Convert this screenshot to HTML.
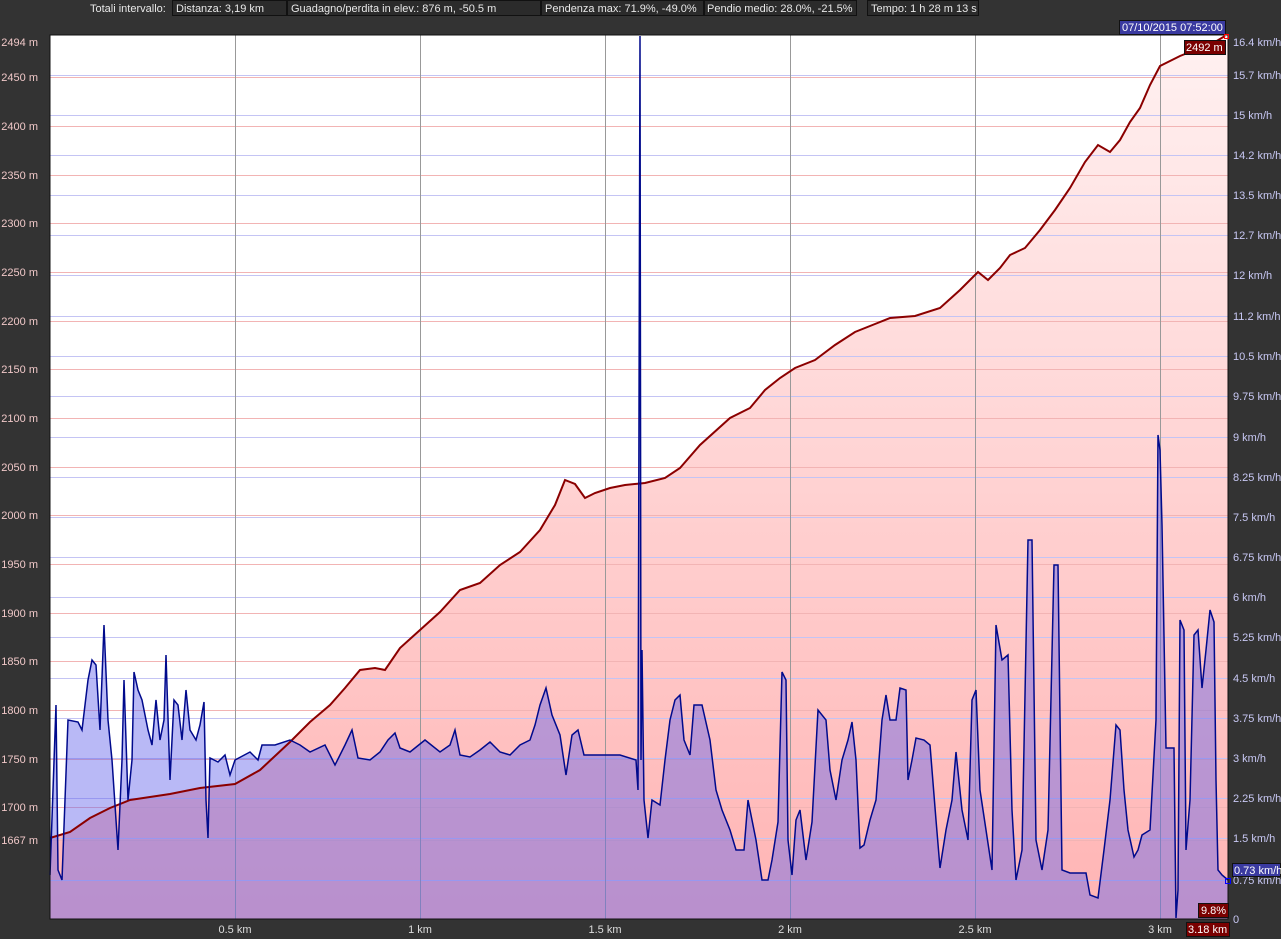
<!DOCTYPE html>
<html><head><meta charset="utf-8"><style>
html,body{margin:0;padding:0;background:#333;width:1281px;height:939px;overflow:hidden}
svg{display:block;font-family:"Liberation Sans",sans-serif}
</style></head><body>
<svg width="1281" height="939" viewBox="0 0 1281 939" xmlns="http://www.w3.org/2000/svg">
<defs>
<linearGradient id="pk" x1="0" y1="0" x2="0" y2="1">
<stop offset="0" stop-color="#fff1f1"/><stop offset="1" stop-color="#ffb4b4"/>
</linearGradient>
</defs>
<rect width="1281" height="939" fill="#333"/>
<!-- top bar -->
<g font-size="11" fill="#e8e8e8">
<text x="90" y="12">Totali intervallo:</text>
<rect x="172.5" y="0.5" width="114" height="15" fill="#2b2b2b" stroke="#111"/>
<text x="176" y="12">Distanza: 3,19 km</text>
<rect x="287.5" y="0.5" width="253" height="15" fill="#2b2b2b" stroke="#111"/>
<text x="291" y="12">Guadagno/perdita in elev.: 876 m, -50.5 m</text>
<rect x="541.5" y="0.5" width="162" height="15" fill="#2b2b2b" stroke="#111"/>
<text x="545" y="12">Pendenza max: 71.9%, -49.0%</text>
<rect x="704.5" y="0.5" width="152" height="15" fill="#2b2b2b" stroke="#111"/>
<text x="707" y="12">Pendio medio: 28.0%, -21.5%</text>
<rect x="867.5" y="0.5" width="111" height="15" fill="#2b2b2b" stroke="#111"/>
<text x="871" y="12">Tempo: 1 h 28 m 13 s</text>
</g>
<!-- plot bg -->
<rect x="50" y="35" width="1178" height="884" fill="#fff"/>
<!-- elevation fill -->
<polygon fill="url(#pk)" points="50,838 70,832 90,818 110,808 130,800 150,797 170,794 200,788 235,784 260,770 290,742 310,722 330,705 345,688 360,670 375,668 385,670 400,648 420,630 440,612 460,590 480,583 500,565 520,552 540,530 555,505 565,480 575,484 585,498 595,493 610,488 625,485 645,483 665,478 680,468 700,445 730,418 750,408 765,390 780,378 795,368 815,360 835,345 855,332 875,324 890,318 915,316 940,308 960,290 978,272 988,280 1000,268 1010,255 1025,248 1040,230 1055,210 1070,188 1085,162 1098,145 1110,152 1120,140 1130,122 1140,108 1150,85 1160,66 1180,56 1200,48 1215,42 1225,36 1228,36 1228,919 50,919"/>
<!-- grid -->
<g stroke="#f2b4b4" stroke-width="1">
<path d="M50 77.5H1228M50 126.5H1228M50 175.5H1228M50 223.5H1228M50 272.5H1228M50 321.5H1228M50 369.5H1228M50 418.5H1228M50 467.5H1228M50 515.5H1228M50 564.5H1228M50 613.5H1228M50 661.5H1228M50 710.5H1228M50 759.5H1228M50 807.5H1228M50 840.5H1228"/>
</g>
<g stroke="#c4c4f4" stroke-width="1">
<path d="M50 75.5H1228M50 115.5H1228M50 155.5H1228M50 195.5H1228M50 235.5H1228M50 275.5H1228M50 316.5H1228M50 356.5H1228M50 396.5H1228M50 437.5H1228M50 477.5H1228M50 517.5H1228M50 557.5H1228M50 597.5H1228M50 637.5H1228M50 678.5H1228M50 718.5H1228M50 758.5H1228M50 798.5H1228M50 838.5H1228M50 880.5H1228"/>
</g>
<g stroke="#999" stroke-width="1">
<path d="M235.5 35V919M420.5 35V919M605.5 35V919M790.5 35V919M975.5 35V919M1160.5 35V919"/>
</g>
<!-- speed fill + line -->
<polygon fill="rgba(100,100,235,0.45)" points="50,919 50,875 56,705 58,870 62,880 68,720 78,722 82,730 88,680 92,660 96,665 100,730 104,625 108,720 112,760 116,820 118,850 122,760 124,680 128,800 132,760 134,672 138,690 142,700 148,730 152,745 156,700 160,740 164,720 166,655 170,780 174,700 178,705 182,740 186,690 190,730 196,740 200,725 204,702 206,800 208,838 210,758 218,762 225,755 230,775 235,760 250,752 258,760 262,745 275,745 290,740 300,745 310,752 325,745 335,765 345,745 352,730 358,758 370,760 380,752 388,740 395,733 400,748 410,752 425,740 440,752 450,745 455,730 460,755 470,757 480,750 490,742 500,752 510,755 520,745 530,740 535,725 540,705 546,688 552,715 560,735 566,775 572,735 578,730 584,755 600,755 620,755 636,760 638,790 640,36 641,760 642,650 644,800 648,838 652,800 660,805 665,760 670,720 675,700 680,695 684,740 690,755 694,705 702,705 710,740 716,790 722,810 730,830 736,850 744,850 748,800 756,840 762,880 768,880 772,860 778,822 782,672 786,680 788,840 792,875 796,820 800,810 806,860 812,822 818,710 826,720 830,770 836,800 842,760 848,740 852,722 856,760 860,848 864,845 870,820 876,800 882,720 886,695 890,720 896,720 900,688 906,690 908,780 912,760 916,738 924,740 930,745 936,820 940,868 946,830 952,800 956,752 962,810 968,840 972,700 976,690 980,790 986,830 992,870 996,625 1002,660 1008,655 1012,810 1016,880 1022,850 1028,540 1032,540 1036,840 1042,870 1048,830 1054,565 1058,565 1062,870 1070,873 1086,873 1090,895 1098,898 1104,850 1110,800 1116,725 1120,730 1124,790 1128,830 1134,857 1138,850 1142,835 1150,830 1156,720 1158,435 1160,450 1162,525 1166,748 1174,748 1176,918 1178,890 1180,620 1184,630 1186,850 1190,800 1194,635 1198,630 1202,688 1206,650 1210,610 1214,622 1216,780 1218,870 1222,875 1228,880 1228,919"/>
<polyline fill="none" stroke="#8b0000" stroke-width="2" points="50,838 70,832 90,818 110,808 130,800 150,797 170,794 200,788 235,784 260,770 290,742 310,722 330,705 345,688 360,670 375,668 385,670 400,648 420,630 440,612 460,590 480,583 500,565 520,552 540,530 555,505 565,480 575,484 585,498 595,493 610,488 625,485 645,483 665,478 680,468 700,445 730,418 750,408 765,390 780,378 795,368 815,360 835,345 855,332 875,324 890,318 915,316 940,308 960,290 978,272 988,280 1000,268 1010,255 1025,248 1040,230 1055,210 1070,188 1085,162 1098,145 1110,152 1120,140 1130,122 1140,108 1150,85 1160,66 1180,56 1200,48 1215,42 1225,36"/>
<polyline fill="none" stroke="#000a8c" stroke-width="1.5" points="50,875 56,705 58,870 62,880 68,720 78,722 82,730 88,680 92,660 96,665 100,730 104,625 108,720 112,760 116,820 118,850 122,760 124,680 128,800 132,760 134,672 138,690 142,700 148,730 152,745 156,700 160,740 164,720 166,655 170,780 174,700 178,705 182,740 186,690 190,730 196,740 200,725 204,702 206,800 208,838 210,758 218,762 225,755 230,775 235,760 250,752 258,760 262,745 275,745 290,740 300,745 310,752 325,745 335,765 345,745 352,730 358,758 370,760 380,752 388,740 395,733 400,748 410,752 425,740 440,752 450,745 455,730 460,755 470,757 480,750 490,742 500,752 510,755 520,745 530,740 535,725 540,705 546,688 552,715 560,735 566,775 572,735 578,730 584,755 600,755 620,755 636,760 638,790 640,36 641,760 642,650 644,800 648,838 652,800 660,805 665,760 670,720 675,700 680,695 684,740 690,755 694,705 702,705 710,740 716,790 722,810 730,830 736,850 744,850 748,800 756,840 762,880 768,880 772,860 778,822 782,672 786,680 788,840 792,875 796,820 800,810 806,860 812,822 818,710 826,720 830,770 836,800 842,760 848,740 852,722 856,760 860,848 864,845 870,820 876,800 882,720 886,695 890,720 896,720 900,688 906,690 908,780 912,760 916,738 924,740 930,745 936,820 940,868 946,830 952,800 956,752 962,810 968,840 972,700 976,690 980,790 986,830 992,870 996,625 1002,660 1008,655 1012,810 1016,880 1022,850 1028,540 1032,540 1036,840 1042,870 1048,830 1054,565 1058,565 1062,870 1070,873 1086,873 1090,895 1098,898 1104,850 1110,800 1116,725 1120,730 1124,790 1128,830 1134,857 1138,850 1142,835 1150,830 1156,720 1158,435 1160,450 1162,525 1166,748 1174,748 1176,918 1178,890 1180,620 1184,630 1186,850 1190,800 1194,635 1198,630 1202,688 1206,650 1210,610 1214,622 1216,780 1218,870 1222,875 1228,880"/>
<rect x="50" y="35" width="1178" height="884" fill="none" stroke="#111" stroke-width="1"/>
<!-- left labels -->
<g font-size="11" fill="#f0c8c8" text-anchor="end">
<text x="38" y="46">2494 m</text><text x="38" y="81">2450 m</text><text x="38" y="130">2400 m</text><text x="38" y="179">2350 m</text><text x="38" y="227">2300 m</text><text x="38" y="276">2250 m</text><text x="38" y="325">2200 m</text><text x="38" y="373">2150 m</text><text x="38" y="422">2100 m</text><text x="38" y="471">2050 m</text><text x="38" y="519">2000 m</text><text x="38" y="568">1950 m</text><text x="38" y="617">1900 m</text><text x="38" y="665">1850 m</text><text x="38" y="714">1800 m</text><text x="38" y="763">1750 m</text><text x="38" y="811">1700 m</text><text x="38" y="844">1667 m</text>
</g>
<!-- right labels -->
<g font-size="11" fill="#c8c8f4">
<text x="1233" y="46">16.4 km/h</text><text x="1233" y="79">15.7 km/h</text><text x="1233" y="119">15 km/h</text><text x="1233" y="159">14.2 km/h</text><text x="1233" y="199">13.5 km/h</text><text x="1233" y="239">12.7 km/h</text><text x="1233" y="279">12 km/h</text><text x="1233" y="320">11.2 km/h</text><text x="1233" y="360">10.5 km/h</text><text x="1233" y="400">9.75 km/h</text><text x="1233" y="441">9 km/h</text><text x="1233" y="481">8.25 km/h</text><text x="1233" y="521">7.5 km/h</text><text x="1233" y="561">6.75 km/h</text><text x="1233" y="601">6 km/h</text><text x="1233" y="641">5.25 km/h</text><text x="1233" y="682">4.5 km/h</text><text x="1233" y="722">3.75 km/h</text><text x="1233" y="762">3 km/h</text><text x="1233" y="802">2.25 km/h</text><text x="1233" y="842">1.5 km/h</text><text x="1233" y="884">0.75 km/h</text><text x="1233" y="923">0</text>
</g>
<!-- bottom labels -->
<g font-size="11" fill="#ddd" text-anchor="middle">
<text x="235" y="933">0.5 km</text><text x="420" y="933">1 km</text><text x="605" y="933">1.5 km</text><text x="790" y="933">2 km</text><text x="975" y="933">2.5 km</text><text x="1160" y="933">3 km</text>
</g>
<!-- markers -->
<g font-size="11" fill="#fff">
<rect x="1119.5" y="20.5" width="106" height="14" fill="#3a3aa0" stroke="#111"/>
<text x="1122" y="31">07/10/2015 07:52:00</text>
<rect x="1184.5" y="40.5" width="41" height="14" fill="#7a0000" stroke="#111"/>
<text x="1186" y="51">2492 m</text>
<rect x="1224.5" y="34.5" width="4" height="4" fill="none" stroke="#f00"/>
<rect x="1232.5" y="863.5" width="48" height="13" fill="#3a3aa0" stroke="#111"/>
<text x="1234" y="874">0.73 km/h</text>
<rect x="1225.5" y="878.5" width="5" height="5" fill="none" stroke="#00f"/>
<rect x="1198.5" y="903.5" width="30" height="14" fill="#7a0000" stroke="#111"/>
<text x="1201" y="914">9.8%</text>
<rect x="1186.5" y="922.5" width="43" height="14" fill="#7a0000" stroke="#111"/>
<text x="1188" y="933">3.18 km</text>
</g>
</svg>
</body></html>
